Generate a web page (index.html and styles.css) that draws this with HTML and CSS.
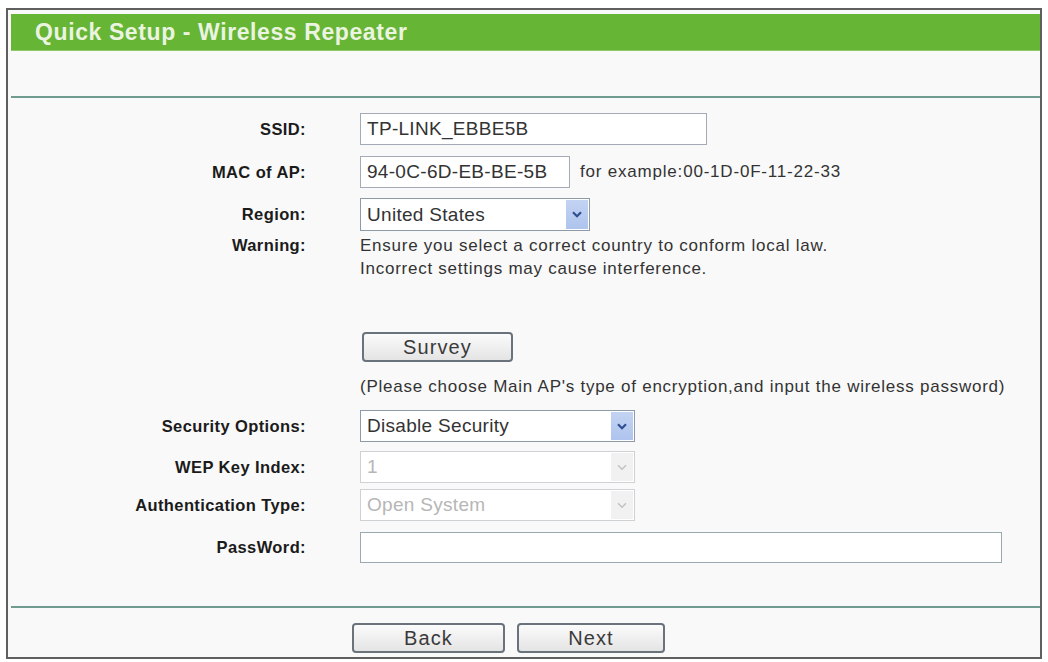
FILE: index.html
```html
<!DOCTYPE html>
<html lang="en">
<head>
<meta charset="utf-8">
<title>Quick Setup - Wireless Repeater</title>
<link rel="stylesheet" href="styles.css">
</head>
<body>
<div class="frame">
  <div class="titlebar">Quick Setup - Wireless Repeater</div>
  <div class="spacer"></div>
  <div class="rule"></div>

  <form class="form">
    <div class="row">
      <label class="lbl">SSID:</label>
      <div class="ctl"><input class="field ssid" type="text" value="TP-LINK_EBBE5B"></div>
    </div>
    <div class="row mac">
      <label class="lbl">MAC of AP:</label>
      <div class="ctl"><input class="field macbox" type="text" value="94-0C-6D-EB-BE-5B"><span class="hint">for example:00-1D-0F-11-22-33</span></div>
    </div>
    <div class="row region">
      <label class="lbl">Region:</label>
      <div class="ctl">
        <div class="select region-sel">
          <span class="value">United States</span>
          <span class="arrow"><svg viewBox="0 0 10 7" width="10" height="7"><path d="M1 1.2 L5 5.2 L9 1.2" fill="none" stroke="currentColor" stroke-width="2.2"/></svg></span>
        </div>
      </div>
    </div>
    <div class="row warning">
      <label class="lbl">Warning:</label>
      <div class="ctl note">Ensure you select a correct country to conform local law.<br>Incorrect settings may cause interference.</div>
    </div>
    <div class="row survey">
      <span class="lbl"></span>
      <div class="ctl"><button type="button" class="btn survey-btn">Survey</button></div>
    </div>
    <div class="row please">
      <span class="lbl"></span>
      <div class="ctl note wide">(Please choose Main AP's type of encryption,and input the wireless password)</div>
    </div>
    <div class="row security">
      <label class="lbl">Security Options:</label>
      <div class="ctl">
        <div class="select sec-sel">
          <span class="value">Disable Security</span>
          <span class="arrow"><svg viewBox="0 0 10 7" width="10" height="7"><path d="M1 1.2 L5 5.2 L9 1.2" fill="none" stroke="currentColor" stroke-width="2.2"/></svg></span>
        </div>
      </div>
    </div>
    <div class="row wep">
      <label class="lbl">WEP Key Index:</label>
      <div class="ctl">
        <div class="select sec-sel disabled">
          <span class="value">1</span>
          <span class="arrow"><svg viewBox="0 0 10 7" width="10" height="7"><path d="M1 1.2 L5 5.2 L9 1.2" fill="none" stroke="currentColor" stroke-width="1.4"/></svg></span>
        </div>
      </div>
    </div>
    <div class="row auth">
      <label class="lbl">Authentication Type:</label>
      <div class="ctl">
        <div class="select sec-sel disabled">
          <span class="value">Open System</span>
          <span class="arrow"><svg viewBox="0 0 10 7" width="10" height="7"><path d="M1 1.2 L5 5.2 L9 1.2" fill="none" stroke="currentColor" stroke-width="1.4"/></svg></span>
        </div>
      </div>
    </div>
    <div class="row pass">
      <label class="lbl">PassWord:</label>
      <div class="ctl"><input class="field pwd" type="text" value=""></div>
    </div>
  </form>

  <div class="rule lower"></div>
  <div class="actions">
    <button type="button" class="btn back">Back</button>
    <button type="button" class="btn next">Next</button>
  </div>
</div>
</body>
</html>
```

FILE: styles.css
```css
* { box-sizing: border-box; }

html, body {
  margin: 0;
  background: #ffffff;
}

body {
  font-family: "Liberation Sans", Arial, sans-serif;
  color: #333;
}

.frame {
  margin: 8px 0 0 6px;
  width: 1036px;
  height: 651px;
  border: 2px solid #5f5f5f;
  padding: 4px 0 0 3px;
  background: #f9f9f9;
}

.titlebar {
  height: 37px;
  line-height: 37px;
  padding-left: 24px;
  background: #67b534;
  border-bottom: 1px solid #8fca6a;
  color: #eaf4e0;
  font-size: 23px;
  font-weight: bold;
  letter-spacing: 0.6px;
}

.spacer { height: 45px; }

.rule {
  height: 2px;
  background: #6f9c8e;
}

.rule.lower { margin-top: 43px; }

.form {
  display: flex;
  flex-direction: column;
  padding-top: 15px;
  margin: 0;
}

.row {
  display: grid;
  grid-template-columns: 295px 1fr;
  column-gap: 54px;
  align-items: center;
  min-height: 32px;
}

.row.mac { margin-top: 11px; }
.row.region { margin-top: 10px; }
.row.warning { margin-top: 3px; align-items: start; }
.row.survey { margin-top: 52px; min-height: 30px; }
.row.please { margin-top: 13px; min-height: 23px; }
.row.security { margin-top: 12px; }
.row.wep { margin-top: 9px; }
.row.auth { margin-top: 6px; }
.row.pass { margin-top: 11px; min-height: 31px; }

.lbl {
  text-align: right;
  font-size: 16.5px;
  font-weight: bold;
  letter-spacing: 0.4px;
  color: #1b1b1b;
}

.row.warning .lbl { line-height: 23px; }

.ctl {
  display: flex;
  align-items: center;
}

.note {
  display: block;
  font-size: 17px;
  letter-spacing: 0.75px;
  line-height: 23px;
  color: #333;
}

.note.wide { white-space: nowrap; }

.field {
  height: 32px;
  border: 1px solid #a3acb6;
  background: #fff;
  padding: 0 6px;
  font-family: "Liberation Sans", Arial, sans-serif;
  font-size: 19px;
  letter-spacing: 0.3px;
  color: #333;
  outline: none;
}

.ssid { width: 347px; }
.macbox { width: 210px; }
.pwd { width: 642px; height: 31px; border-color: #9aaab0; }

.hint {
  margin-left: 10px;
  font-size: 17px;
  letter-spacing: 0.8px;
  color: #333;
}

.select {
  display: flex;
  align-items: stretch;
  height: 32px;
  border: 1px solid #8f9aa8;
  background: #fff;
  padding: 1px;
}

.region-sel { width: 230px; height: 33px; }
.sec-sel { width: 275px; }

.select .value {
  flex: 1;
  display: flex;
  align-items: center;
  padding-left: 5px;
  font-size: 19px;
  letter-spacing: 0.3px;
  color: #333;
}

.select .arrow {
  width: 22px;
  display: flex;
  align-items: center;
  justify-content: center;
  background: linear-gradient(#c3d3f2, #aec4ee);
  color: #2f4f93;
}

.select.disabled {
  border-color: #cfd2d5;
}

.select.disabled .value { color: #b6b6b6; }

.select.disabled .arrow {
  background: #f1f1f1;
  color: #c2c2c2;
}

.btn {
  height: 30px;
  border: 2px solid #6a737c;
  border-radius: 4px;
  background: linear-gradient(#fbfbfb, #e4e4e4);
  font-family: "Liberation Sans", Arial, sans-serif;
  font-size: 20px;
  letter-spacing: 1.1px;
  color: #3a3a3a;
  padding: 0;
}

.survey-btn { width: 151px; margin-left: 2px; }

.actions {
  display: flex;
  gap: 12px;
  padding: 15px 0 0 341px;
}

.back { width: 153px; }
.next { width: 148px; }
```
